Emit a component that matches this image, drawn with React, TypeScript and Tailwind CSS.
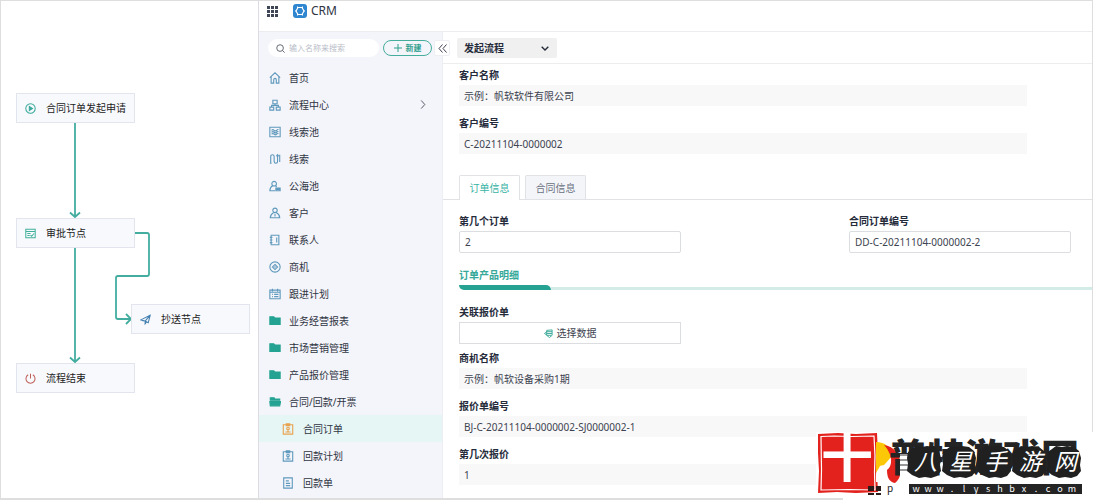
import React from 'react';

const icons: Record<string, React.ReactNode> = {
  home: (
    <path d="M1 6.5 7 1l6 5.5M2.5 5.5V13h3V9a1.5 1.5 0 0 1 3 0v4h3V5.5" />
  ),
  flow: (
    <path d="M4.5 1.5h5v4h-5zM1 9.5h4.5V13H1zM8.500 9.500H13V13H8.500zM7 5.500v2M3 9.500v-2h8v2" />
  ),
  pool: (
    <path d="M1 1.500h12v11H1zM3 5q1.500-1.500 3 0t3 0 2-.500M3 7.300q1.500-1.500 3 0t3 0 2-.500M3 9.600q1.500-1.500 3 0t3 0 2-.500" />
  ),
  clue: (
    <path d="M2 12V4a2 2 0 0 1 4 0v6a2 2 0 0 0 4 0V2.500M1 12h2M8.500 3.800 10 2l1.500 1.800M12.500 2v8.500" />
  ),
  sea: (
    <path d="M6 7a2.600 2.600 0 1 0 0-5.400A2.600 2.600 0 0 0 6 7zM4.500 6.500C2 8 1 10 1 12.500h6M8 7l1 1M8 9.500h5v3H8zM8 11h5" />
  ),
  client: (
    <path d="M7 6.500a2.600 2.600 0 1 0 0-5.200 2.600 2.600 0 0 0 0 5.200zM5.500 6.500C3 8 1.500 10 1.500 12.500h11C12.500 10 11 8 8.500 6.500M7 8v3" />
  ),
  contact: <path d="M2.500 1.500h9v11h-9zM9 4v6M1 4h3M1 7h3M1 10h3" />,
  chance: (
    <path d="M7 13A6 6 0 1 0 7 1a6 6 0 0 0 0 12zM7 4l3 3-3 3-3-3zM7 6.200v1.600M6.200 7h1.600" />
  ),
  plan: (
    <path d="M1 2.500h12v10H1zM1 5h12M4 1v3M10 1v3M3.500 7.500h1M6 7.500h5M3.500 10h1M6 10h5" />
  ),
  folder: (
    <path
      d="M1 2h4.500L7 3.500h6V11H1z"
      fill="currentColor"
    />
  ),
  opened: (
    <>
      <path d="M1.500 2h4.500l1 1.500h5.500V5h-11z" fill="currentColor" />
      <path d="M1 6.500h12.500L12.500 11.500h-11z" fill="currentColor" />
    </>
  ),
  order: (
    <path d="M1.500 2h11v11h-11zM5 1h4v2H5zM7 8a1.500 1.500 0 1 0 0-3 1.500 1.500 0 0 0 0 3zM4 10.500h6M7 8v2" />
  ),
  bill: <path d="M2 1h10v12H2zM4.500 4.500H8M4.500 7.500h5M4.500 10h5" />,
  start: (
    <>
      <circle cx="7" cy="7" r="6" />
      <path d="M5.500 4.500v5l4-2.500z" fill="currentColor" />
    </>
  ),
  approve: <path d="M1 1.500h12v11H1zM1 4.500h12M3 7h4M3 9.500h3M7 9l1.500 1.500L11.500 7" />,
  send: <path d="M1 7.500 13 1.500 10.500 11 6.500 9zM6.500 9 13 1.500M6.500 9v3.500l1.800-2.500M1 7.500 4.500 9" />,
  power: <path d="M4 2.300a5.800 5.800 0 1 0 6 0M7 1v6" />,
};

const Icon = ({ name, className }: { name: string; className: string }) => (
  <svg
    viewBox="0 0 14 14"
    className={className}
    fill="none"
    stroke="currentColor"
    strokeWidth="1.3"
    aria-hidden="true"
  >
    {icons[name]}
  </svg>
);

const Menu = [
  { id: 1, text: '首页', icon: 'home' },
  { id: 2, text: '流程中心', icon: 'flow', arrow: true },
  { id: 3, text: '线索池', icon: 'pool' },
  { id: 4, text: '线索', icon: 'clue' },
  { id: 5, text: '公海池', icon: 'sea' },
  { id: 6, text: '客户', icon: 'client' },
  { id: 7, text: '联系人', icon: 'contact' },
  { id: 8, text: '商机', icon: 'chance' },
  { id: 9, text: '跟进计划', icon: 'plan' },
  { id: 10, text: '业务经营报表', icon: 'folder' },
  { id: 11, text: '市场营销管理', icon: 'folder' },
  { id: 12, text: '产品报价管理', icon: 'folder' },
  { id: 13, text: '合同/回款/开票', icon: 'opened' },
];

const SubMenu = [
  { id: 1, text: '合同订单', icon: 'order', active: true },
  { id: 2, text: '回款计划', icon: 'order' },
  { id: 3, text: '回款单', icon: 'bill' },
];

const Nodes = [
  { id: 1, text: '合同订单发起申请', icon: 'start', place: 'left-[15px] top-[92px]', color: 'text-[#3aa99b]' },
  { id: 2, text: '审批节点', icon: 'approve', place: 'left-[15px] top-[217px]', color: 'text-[#3fb09c]' },
  { id: 3, text: '抄送节点', icon: 'send', place: 'left-[130px] top-[303px]', color: 'text-[#4380b0]' },
  { id: 4, text: '流程结束', icon: 'power', place: 'left-[15px] top-[362px]', color: 'text-[#c0605a]' },
];

const Field = ({ id, label, value }: { id: string; label: string; value: string }) => (
  <div className="flex flex-col">
    <label htmlFor={id} className="h-5 font-bold leading-5">
      {label}
    </label>
    <input
      id={id}
      readOnly
      defaultValue={value}
      className="h-[21px] w-full bg-[#f8f8f9] px-[5px] text-[#3d4350] outline-none"
    />
  </div>
);

const BoxField = ({ id, label, value }: { id: string; label: string; value: string }) => (
  <div className="flex w-[222px] flex-col">
    <label htmlFor={id} className="h-5 font-bold leading-5">
      {label}
    </label>
    <input
      id={id}
      defaultValue={value}
      className="h-[22px] w-full rounded-xs border border-[#dcdde0] bg-white px-[5px] text-[#3d4350] outline-none"
    />
  </div>
);

const FlowChart: React.FC = () => (
  <section className="relative w-[257px] shrink-0">
    <svg
      className="absolute left-0 top-0 h-[420px] w-[257px]"
      viewBox="1 1 257 420"
      fill="none"
      stroke="#43ada0"
      strokeWidth="1.8"
      aria-hidden="true"
    >
      <path d="M75 122v95M70 212.500l5 4.500 5-4.500" />
      <path d="M75 247v115M70 357.500l5 4.500 5-4.500" />
      <path d="M134 233h13a2 2 0 0 1 2 2v39a2 2 0 0 1-2 2h-29a2 2 0 0 0-2 2v39a2 2 0 0 0 2 2h13M126 314l5 5-5 5" />
    </svg>
    {Nodes.map(res => (
      <div
        key={res.id}
        className={`absolute flex h-[30px] w-[119px] items-center whitespace-nowrap border border-[#e2e4ee] bg-[#f8f9fd] pl-2 ${res.place}`}
      >
        <Icon name={res.icon} className={`mr-[10px] h-[11px] w-[11px] shrink-0 ${res.color}`} />
        <span className="text-[#222]">{res.text}</span>
      </div>
    ))}
  </section>
);

const Sidebar: React.FC = () => (
  <aside className="relative w-[184px] shrink-0 border-r border-[#eceef3] bg-[#f4f5fa]">
    <div className="flex h-8 items-center gap-1 pl-[9px] pr-[10px]">
      <div className="flex h-[18px] min-w-0 flex-1 items-center gap-1 rounded-full bg-white px-2">
        <svg viewBox="0 0 10 10" className="h-[9px] w-[9px] shrink-0" fill="none" stroke="#555b66" aria-hidden="true">
          <circle cx="4.500" cy="4.500" r="3.700" />
          <path d="m7.300 7.300 2.300 2.300" />
        </svg>
        <input
          type="search"
          aria-label="搜索"
          placeholder="输入名称来搜索"
          className="w-full min-w-0 text-[8px] outline-none placeholder:text-[#b9bdc8]"
        />
      </div>
      <button className="flex h-4 w-[49px] items-center justify-center gap-1 rounded-full border border-[#45ad9c] text-[8px] font-bold text-[#2ea08e]">
        <svg viewBox="0 0 8 8" className="h-2 w-2" stroke="currentColor" aria-hidden="true">
          <path d="M4 0v8M0 4h8" />
        </svg>
        新建
      </button>
    </div>
    <button
      aria-label="收起"
      className="absolute -right-2 top-2 flex h-4 w-4 items-center justify-center rounded-xs border border-[#eeeff2] bg-white"
    >
      <svg viewBox="0 0 9 9" className="h-[9px] w-[9px]" fill="none" stroke="#3d4350" aria-hidden="true">
        <path d="M4.500.500 1 4.500l3.500 4M8.500.500 5 4.500l3.500 4" />
      </svg>
    </button>
    <nav className="text-[#2f3443]">
      {Menu.map(res => (
        <a key={res.id} href="#" className="flex h-[27px] items-center pl-[10px] pr-4">
          <Icon
            name={res.icon}
            className={`mr-2 h-3 w-3 shrink-0 ${res.id > 9 ? 'text-[#25a392]' : 'text-[#5f99bd]'}`}
          />
          <span className="flex-1">{res.text}</span>
          {res.arrow && (
            <svg viewBox="0 0 6 10" className="h-[9px] w-[6px]" fill="none" stroke="#444b58" aria-hidden="true">
              <path d="m1 .500 4 4.500-4 4.500" />
            </svg>
          )}
        </a>
      ))}
      {SubMenu.map(res => (
        <a
          key={res.id}
          href="#"
          className={`flex h-[27px] items-center pl-[23px] ${res.active ? 'bg-[#e6f6f4]' : ''}`}
        >
          <Icon
            name={res.icon}
            className={`mr-[9px] h-3 w-3 shrink-0 ${res.active ? 'text-[#e9a24f]' : 'text-[#5f99bd]'}`}
          />
          {res.text}
        </a>
      ))}
    </nav>
  </aside>
);

const OrderForm: React.FC = () => (
  <main className="min-w-0 flex-1 text-[#252b3a]">
    <div className="flex h-8 items-center border-b border-[#ededf0] pl-[14px]">
      <div className="relative w-[100px]">
        <select
          aria-label="流程"
          className="h-5 w-full appearance-none rounded-xs bg-[#f0f0f1] pl-[7px] font-bold outline-none"
        >
          <option>发起流程</option>
        </select>
        <svg
          viewBox="0 0 8 5"
          className="pointer-events-none absolute right-2 top-2 h-[5px] w-2"
          fill="none"
          stroke="#252b3a"
          strokeWidth="1.4"
          aria-hidden="true"
        >
          <path d="m.700.700 3.300 3.300L7.300.700" />
        </svg>
      </div>
    </div>
    <div className="mt-px flex flex-col gap-[7px] pl-4 pr-[10%]">
      <Field id="name" label="客户名称" value="示例：帆软软件有限公司" />
      <Field id="code" label="客户编号" value="C-20211104-0000002" />
    </div>
    <div className="mt-[21px] flex gap-[5px] border-b border-[#e0e2e6] pl-4" role="tablist">
      <button
        role="tab"
        aria-selected="true"
        className="-mb-px h-[25px] w-[61px] rounded-t-xs border border-b-0 border-[#e0e2e6] bg-white text-[#35b3a5]"
      >
        订单信息
      </button>
      <button
        role="tab"
        aria-selected="false"
        className="h-6 w-[61px] rounded-t-xs border border-b-0 border-[#e0e2e6] bg-[#f4f5f9] text-[#6a7180]"
      >
        合同信息
      </button>
    </div>
    <div className="mt-[11px] flex justify-between gap-4 pl-4 pr-[21px]">
      <BoxField id="index" label="第几个订单" value="2" />
      <BoxField id="orderCode" label="合同订单编号" value="DD-C-20211104-0000002-2" />
    </div>
    <div className="mt-3 pl-4">
      <h2 className="h-5 font-bold leading-5 text-[#35a899]">订单产品明细</h2>
      <div className="flex items-end">
        <div className="h-[5px] w-[92px] rounded-bl-md rounded-tr-md bg-[#25a292]" />
        <div className="h-[3px] flex-1 bg-[#d3ece7]" />
      </div>
    </div>
    <div className="mt-3 flex flex-col pl-4 pr-[21px]">
      <div className="h-5 font-bold leading-5">关联报价单</div>
      <button className="flex h-[22px] w-[222px] items-center justify-center gap-1 border border-[#dcdde0] bg-white text-[#3d4350]">
        <svg viewBox="0 0 10 10" className="h-[9px] w-[9px]" fill="none" stroke="#32a595" aria-hidden="true">
          <path d="M3 1.500 9 1v6L6 9.500 3 7zM3 3h6M3 5h6M3 7h5M3 3 .500 5 3 6.500" />
        </svg>
        选择数据
      </button>
    </div>
    <div className="mt-1 flex flex-col gap-[7px] pl-4 pr-[10%]">
      <Field id="chance" label="商机名称" value="示例：帆软设备采购1期" />
      <Field id="quote" label="报价单编号" value="BJ-C-20211104-0000002-SJ0000002-1" />
      <Field id="times" label="第几次报价" value="1" />
    </div>
  </main>
);

// site badge in the corner
const blobs = [
  { x: 93, text: '八' },
  { x: 128, text: '星' },
  { x: 163, text: '手' },
  { x: 198, text: '游' },
  { x: 233, text: '网' },
];

const SiteBadge: React.FC = () => (
  <svg
    viewBox="0 0 277 68"
    className="absolute -bottom-0.5 -right-px h-[68px] w-[277px] font-['Noto_Sans_CJK_SC',sans-serif]"
    role="img"
    aria-label="www.lyshbx.com"
  >
    <path d="M0 0h277v68H27v-3H0z" fill="#fff" />
    <path d="m2 2 20-1 18 1 21-1 1 22-1 18 1 19-22 1-19-1-19 1 1-22-1-18z" fill="#e3211d" />
    <path d="M5 4.500 18 4l18 .500 22-.500 1 20-.500 16 .500 18-26-.500L5 58l.500-20z" fill="none" stroke="#fff" strokeWidth="1.200" />
    <text x="5" y="45" fontSize="52" fontWeight="700" fill="#fff">
      十
    </text>
    <path d="M60 10c9 0 15 5 16 14l-7 8-9 9z" fill="#fbc707" />
    <path d="M68 13c9 1 17 9 17 22 0 8-2 13-6 16-6-1-8-6-8-13 5-3 7-14-3-25z" fill="#e3211d" />
    <path d="M64 34q5-2 7 2v14H60V41z" fill="#fff" />
    <text x="73" y="39" fontSize="38" fontWeight="900" fill="#242424">
      普特游戏网
    </text>
    <path d="M84 22h12v25H84z" fill="#fff" />
    <path d="M84 23h12M84 28h12M84 33h12M84 38h10" stroke="#333" strokeWidth="1" />
    {blobs.map(res => (
      <g key={res.x}>
        <path
          transform={`translate(${res.x} 14)`}
          d="M3 3 7 0l6 1 5-1 7 1 5 4 2 7-1 7 1 6-4 5-6 2-6-1-6 1-7-3-5-4 1-7-1-6 1-6z"
          fill="#202020"
        />
        <text x={res.x + 5} y="38" fontSize="23" fontStyle="italic" fill="#fff">
          {res.text}
        </text>
      </g>
    ))}
    <path d="M52 54h6v5h-6zM60 54h5v5h-5zM52 61h6v2h-6zM60 61h5v2h-5z" fill="#2a1a1a" />
    <text x="71" y="60" fontSize="10" fill="#222">
      p
    </text>
    <rect x="93" y="52" width="173" height="10" fill="#242424" />
    {'www.lyshbx.com'.split('').map((char, i) => (
      <text key={i} x={100 + i * 12} y="60" fontSize="9" fill="#fff" textAnchor="middle">
        {char}
      </text>
    ))}
  </svg>
);

const App: React.FC = () => (
  <div className="relative flex min-h-screen border border-b-2 border-[#dedede] bg-white font-['Noto_Sans','Noto_Sans_CJK_SC',sans-serif] text-[10px] leading-4">
    <FlowChart />
    <div className="flex min-w-0 flex-1 flex-col border-l border-[#dcdce2]">
      <header className="flex h-[31px] items-center border-b border-[#ececf0] pb-[10px] pl-2">
        <button aria-label="应用">
          <svg viewBox="0 0 11 11" className="h-[11px] w-[11px]" fill="#3f4656" aria-hidden="true">
            <path d="M0 0h3v3H0zM4 0h3v3H4zM8 0h3v3H8zM0 4h3v3H0zM4 4h3v3H4zM8 4h3v3H8zM0 8h3v3H0zM4 8h3v3H4zM8 8h3v3H8z" />
          </svg>
        </button>
        <svg viewBox="0 0 14 14" className="ml-[15px] mr-1 h-[14px] w-[14px]" fill="none" stroke="#fff" aria-hidden="true">
          <rect width="14" height="14" rx="3" fill="#2e86d0" stroke="none" />
          <path d="M5 3.500h4L11 7l-2 3.500H5L3 7z" strokeWidth="1.200" />
          <path d="M4 3.200h1M9 3.200h1M2.500 7h1M10.500 7h1M4 10.800h1M9 10.800h1" strokeWidth="1.600" />
        </svg>
        <span className="text-xs text-[#2f3443]">CRM</span>
      </header>
      <div className="flex flex-1">
        <Sidebar />
        <OrderForm />
      </div>
    </div>
    <SiteBadge />
  </div>
);

export default App;
